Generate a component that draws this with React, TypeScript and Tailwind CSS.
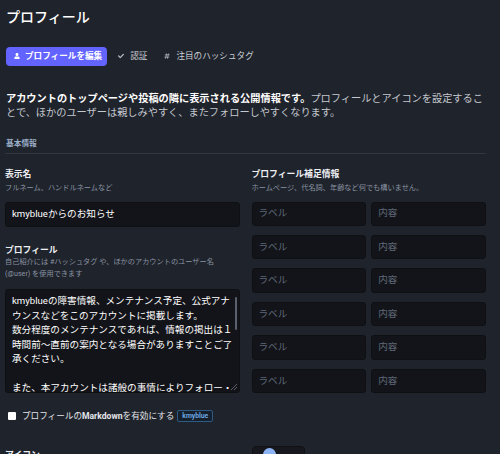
import { FaUser, FaCheck, FaHashtag } from 'react-icons/fa';

const FONT = { fontFamily: 'Roboto, "Noto Sans CJK JP", sans-serif' };

const BIO_LINES = [
  'kmyblueの障害情報、メンテナンス予定、公式アナ',
  'ウンスなどをこのアカウントに掲載します。',
  '数分程度のメンテナンスであれば、情報の掲出は１',
  '時間前〜直前の案内となる場合がありますことご了',
  '承ください。',
  '',
  'また、本アカウントは諸般の事情によりフォロー・',
];

function FieldLabel({ title, hint }: { title: string; hint: React.ReactNode }) {
  return (
    <div>
      <div className="text-[8.8px] leading-[11px] font-bold text-[#eceef2]">{title}</div>
      <div className="mt-[2px] text-[7.2px] leading-[12px] text-[#8a93a3]">{hint}</div>
    </div>
  );
}

export default function App() {
  return (
    <div className="w-[500px] h-[454px] overflow-hidden bg-[#1f232b] px-[5px] pt-[8px]" style={FONT}>
      <h1 className="text-[14px] leading-[18px] font-medium text-white pl-[1px]">プロフィール</h1>

      {/* tabs */}
      <div className="mt-[20.5px] flex items-center h-[19px]">
        <div className="h-[19px] rounded-[4px] bg-[#6364ff] flex items-center pl-[8px] pr-[5px] gap-[5px] text-[8.6px] font-bold text-white ml-[1px]">
          <FaUser className="w-[6px] h-[6px]" />
          <span>プロフィールを編集</span>
        </div>
        <div className="ml-[11px] flex items-center gap-[6px] text-[8.6px] text-[#c8cdd5]">
          <FaCheck className="w-[6px] h-[6px] text-[#b4bac4]" />
          <span>認証</span>
        </div>
        <div className="ml-[17px] flex items-center gap-[6px] text-[8.6px] text-[#c8cdd5]">
          <FaHashtag className="w-[6px] h-[6px] text-[#b4bac4]" />
          <span>注目のハッシュタグ</span>
        </div>
      </div>

      <p className="mt-[26px] text-[10.2px] leading-[14px] text-[#c4c8cf] whitespace-nowrap pl-[1px]">
        <strong className="font-bold text-white">アカウントのトップページや投稿の隣に表示される公開情報です。</strong>
        プロフィールとアイコンを設定するこ
        <br />
        とで、ほかのユーザーは親しみやすく、またフォローしやすくなります。
      </p>

      <div className="mt-[19px] w-[481px] border-b border-[#313643] pb-[4px] text-[7.7px] leading-[10px] font-bold text-[#9baec8] pl-[1px]">
        基本情報
      </div>

      <div className="mt-[15px] w-[481px] grid grid-cols-2 gap-x-[12px]">
        {/* left column */}
        <div className="flex flex-col">
          <FieldLabel title="表示名" hint="フルネーム、ハンドルネームなど" />
          <div className="mt-[8px] h-[25px] rounded-[3px] bg-[#131419] border border-[#0f1013] flex items-center px-[6px] text-[9.6px] text-white">
            kmyblueからのお知らせ
          </div>

          <div className="mt-[18px]">
            <div className="text-[8.8px] leading-[11px] font-bold text-[#eceef2]">プロフィール</div>
            <div className="text-[7.2px] leading-[12.3px] text-[#8a93a3]">
              自己紹介には #ハッシュタグ や、ほかのアカウントのユーザー名
              <br />
              (@user) を使用できます
            </div>
          </div>

          <div className="relative mt-[9px] h-[103.5px] rounded-[3px] bg-[#131419] border border-[#0f1013] overflow-hidden pl-[6px] pt-[4px] text-[9.6px] leading-[14.5px] text-white">
            {BIO_LINES.map((line, i) => (
              <div key={i} className="whitespace-pre h-[14.5px]">{line}</div>
            ))}
            <div className="absolute right-[2px] top-[7px] w-[2px] h-[33px] rounded-full bg-[#5a606c]" />
            <svg className="absolute right-[2px] bottom-[2px]" width="7" height="7" viewBox="0 0 7 7">
              <path d="M7 1 L1 7 M7 4 L4 7" stroke="#6b717c" strokeWidth="0.8" />
            </svg>
          </div>

          <div className="mt-[17px] h-[13px] flex items-center text-[8.6px] text-[#e4e6ea]">
            <span className="ml-[3px] w-[8px] h-[8px] rounded-[1px] bg-white" />
            <span className="ml-[6px]">
              プロフィールの<span className="font-bold">Markdown</span>を有効にする
            </span>
            <span className="ml-[3px] h-[12px] px-[4px] flex items-center rounded-[2px] border border-[#2d5b85] bg-[#16202c] text-[6.8px] font-bold text-[#6aa6e0]">
              kmyblue
            </span>
          </div>

          <div className="mt-[27px] text-[8.8px] leading-[11px] font-bold text-[#eceef2]">アイコン</div>
        </div>

        {/* right column */}
        <div className="flex flex-col">
          <FieldLabel title="プロフィール補足情報" hint="ホームページ、代名詞、年齢など何でも構いません。" />
          <div className="mt-[8px] grid grid-cols-2 gap-x-[5px] gap-y-[9.2px]">
            {Array.from({ length: 6 }).map((_, i) => (
              <div key={i} className="contents">
                <div className="h-[24.3px] rounded-[3px] bg-[#131419] border border-[#0f1013] flex items-center px-[6px] text-[9.6px] text-[#5f6878]">
                  ラベル
                </div>
                <div className="h-[24.3px] rounded-[3px] bg-[#131419] border border-[#0f1013] flex items-center px-[6px] text-[9.6px] text-[#5f6878]">
                  内容
                </div>
              </div>
            ))}
          </div>
          <div className="mt-[53px] w-[53px] h-[20px] rounded-t-[4px] bg-[#16181d] border border-[#101114] pl-[10px] pt-[1px]">
            <div className="w-[13px] h-[13px] rounded-full bg-[#8cb4f4]" />
          </div>
        </div>
      </div>
    </div>
  );
}
